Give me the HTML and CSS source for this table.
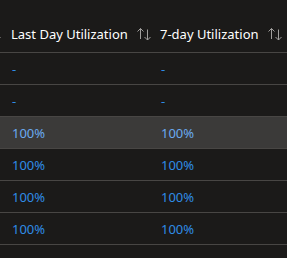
FILE: index.html
```html
<!DOCTYPE html>
<html>
<head>
<meta charset="utf-8">
<link rel="stylesheet" href="styles.css">
</head>
<body>
<div class="grid">
  <div class="hcell stub"><svg class="sort" viewBox="0 0 16 14" width="16" height="14"><path d="M4.5 12V1.5M1.5 4.5l3-3 3 3M11.5 2.5V13M8.5 10l3 3 3-3"/></svg></div>
  <div class="hcell"><span class="htext">Last Day Utilization</span><svg class="sort" viewBox="0 0 16 14" width="16" height="14"><path d="M4.5 12V1.5M1.5 4.5l3-3 3 3M11.5 2.5V13M8.5 10l3 3 3-3"/></svg></div>
  <div class="hcell"><span class="htext">7-day Utilization</span><svg class="sort" viewBox="0 0 16 14" width="16" height="14"><path d="M4.5 12V1.5M1.5 4.5l3-3 3 3M11.5 2.5V13M8.5 10l3 3 3-3"/></svg></div>

  <div class="row">
    <div class="cell stub"></div><div class="cell">-</div><div class="cell">-</div>
  </div>
  <div class="row">
    <div class="cell stub"></div><div class="cell">-</div><div class="cell">-</div>
  </div>
  <div class="row hover">
    <div class="cell stub"></div><div class="cell">100%</div><div class="cell">100%</div>
  </div>
  <div class="row">
    <div class="cell stub"></div><div class="cell">100%</div><div class="cell">100%</div>
  </div>
  <div class="row">
    <div class="cell stub"></div><div class="cell">100%</div><div class="cell">100%</div>
  </div>
  <div class="row">
    <div class="cell stub"></div><div class="cell">100%</div><div class="cell">100%</div>
  </div>
</div>
</body>
</html>
```
FILE: styles.css
```css
html, body {
  margin: 0;
  padding: 0;
  background: #1b1a19;
  overflow: hidden;
}
body {
  font-family: "Segoe UI", "Noto Sans", sans-serif;
  font-size: 13px;
}
.grid {
  display: grid;
  grid-template-columns: 3px 149px 149px;
}
.hcell {
  height: 53px;
  box-sizing: border-box;
  border-bottom: 1px solid #484644;
  display: flex;
  align-items: flex-end;
  padding: 0 0 8px 8px;
  color: #ffffff;
  white-space: nowrap;
}
.hcell.stub {
  padding: 0 0 8px 0;
  justify-content: flex-end;
  overflow: visible;
}
.htext {
  line-height: 20px;
}
.sort {
  fill: none;
  stroke: #a19f9d;
  stroke-width: 1;
  margin-left: 8px;
  margin-bottom: 3px;
  flex: none;
}
.stub .sort {
  margin-right: 1px;
}
.row {
  display: contents;
}
.cell {
  height: 32px;
  box-sizing: border-box;
  border-bottom: 1px solid #484644;
  display: flex;
  align-items: center;
  padding-left: 9px;
  color: #2f8ce6;
  white-space: nowrap;
}
.cell.stub {
  padding: 0;
}
.hover .cell {
  background: #3b3a39;
  color: #6aaaf0;
}
```
